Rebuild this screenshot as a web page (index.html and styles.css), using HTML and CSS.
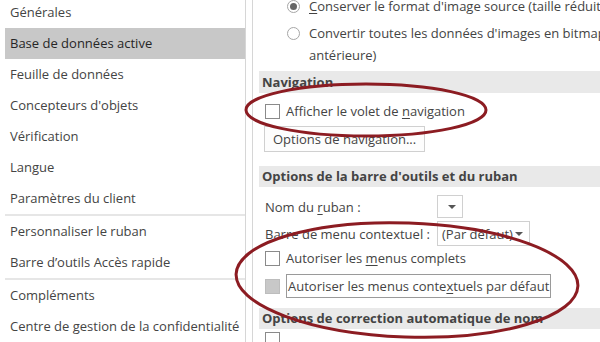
FILE: index.html
```html
<!DOCTYPE html>
<html lang="fr">
<head>
	<meta charset="utf-8">
	<title>Options Access</title>
	<link rel="stylesheet" href="styles.css">
</head>
<body>
	<div class="app">
		<ul class="menu">
			<li>Générales</li>
			<li class="sel">Base de données active</li>
			<li>Feuille de données</li>
			<li>Concepteurs d'objets</li>
			<li>Vérification</li>
			<li>Langue</li>
			<li>Paramètres du client</li>
			<li class="sep"></li>
			<li>Personnaliser le ruban</li>
			<li>Barre d’outils Accès rapide</li>
			<li class="sep"></li>
			<li>Compléments</li>
			<li>Centre de gestion de la confidentialité</li>
		</ul>
		<div class="panel">
			<div class="radio-row first"><span class="radio on"></span><span><u>C</u>onserver le format d'image source (taille réduite</span></div>
			<div class="radio-row"><span class="radio"></span><span>Convertir toutes les données d'images en bitmap<br>antérieure)</span></div>

			<div class="head h-nav">Navigation</div>
			<div class="check-row nav"><span class="box"></span><span>Afficher le volet de <u>n</u>avigation</span></div>
			<div class="btn">Options de navigation...</div>

			<div class="head h-bar">Options de la barre d'outils et du ruban</div>
			<div class="field-row r1"><span class="lbl">Nom du <u>r</u>uban :</span><span class="drop small"><i class="arrow"></i></span></div>
			<div class="field-row r2"><span class="lbl">Barre de menu contextuel :</span><span class="drop wide">(Par défaut)<i class="arrow"></i></span></div>
			<div class="check-row c1"><span class="box"></span><span>Autoriser les <u>m</u>enus complets</span></div>
			<div class="check-row c2"><span class="box grey"></span><span class="focus">Autoriser les menus conte<u>x</u>tuels par défaut</span></div>

			<div class="head h-corr">Options de correction automatique de nom</div>
			<div class="check-row c3"><span class="box"></span></div>
		</div>
	</div>
	<!-- annotations drawn over the screenshot -->
	<svg class="marks" width="600" height="342" viewBox="0 0 600 342">
		<ellipse cx="366" cy="110" rx="120" ry="26" />
		<ellipse cx="407" cy="280" rx="171" ry="57" transform="rotate(2 407 280)" />
	</svg>
</body>
</html>
```

FILE: styles.css
```css
body {
	margin: 0;
	width: 600px;
	height: 342px;
	overflow: hidden;
	background: #fff;
	color: #444;
	font-family: "Open Sans", "Noto Sans", sans-serif;
	font-size: 13px;
	position: relative;
}

u {
	text-decoration-thickness: 1px;
	text-underline-offset: 2px;
}

.app {
	display: flex;
	height: 342px;
}

/* left menu */
.menu {
	list-style: none;
	margin: -3px 0 0 0;
	padding: 0 0 0 5px;
	width: 240px;
	border-right: 1px solid #d6d6d6;
	flex-shrink: 0;
}

.menu li {
	height: 31px;
	line-height: 31px;
	padding-left: 5px;
	white-space: nowrap;
}

.menu li.sel {
	background: #c8c8c8;
	color: #262626;
}

.menu li.sep {
	height: 0;
	padding: 0;
	border-top: 2px solid #e6e6e6;
}

/* right panel */
.panel {
	margin-left: 6px;
	border-left: 1px solid #d6d6d6;
	padding-left: 6px;
	flex: 1;
	white-space: nowrap;
	overflow: hidden;
}

.radio-row {
	display: flex;
	align-items: flex-start;
	padding-left: 28px;
	line-height: 22px;
}

.radio-row.first {
	margin-top: -5px;
}

.radio-row + .radio-row {
	margin-top: 5px;
}

.radio {
	width: 11px;
	height: 11px;
	border: 1px solid #a6a6a6;
	border-radius: 50%;
	margin: 5px 9px 0 0;
	position: relative;
	flex-shrink: 0;
}

.radio.on::after {
	content: "";
	position: absolute;
	left: 2px;
	top: 2px;
	width: 7px;
	height: 7px;
	border-radius: 50%;
	background: #666;
}

.head {
	background: #e9e9e9;
	height: 22px;
	line-height: 22px;
	padding-left: 3px;
	font-weight: 700;
	margin-right: -10px;
}

.h-nav { margin-top: 5px; }
.h-bar { margin-top: 14px; height: 21px; line-height: 21px; }
.h-corr { margin-top: 10px; height: 21px; line-height: 21px; }

.check-row {
	display: flex;
	align-items: center;
	padding-left: 6px;
	height: 24px;
}

.box {
	width: 13px;
	height: 13px;
	border: 1px solid #8a8a8a;
	background: #fff;
	margin-right: 6px;
	flex-shrink: 0;
}

.box.grey {
	background: #c8c8c8;
	border-color: #bdbdbd;
}

.check-row.nav { margin-top: 6px; }
.check-row.c1 { margin-top: 1px; height: 22px; }
.check-row.c2 { margin-top: 5px; }
.check-row.c3 { margin-top: 3px; align-items: flex-start; }

.focus {
	border: 1px solid #9a9a9a;
	padding: 0 1px;
	line-height: 22px;
}

.btn {
	display: inline-block;
	margin: 3px 0 0 5px;
	height: 24px;
	line-height: 24px;
	padding: 0 8px;
	border: 1px solid #d0d0d0;
	background: #fdfdfd;
}

.field-row {
	display: flex;
	align-items: center;
	padding-left: 6px;
}

.field-row.r1 { margin-top: 8px; height: 23px; }
.field-row.r2 { margin-top: 3px; height: 25px; }

.lbl {
	width: 172px;
}

.drop {
	height: 100%;
	box-sizing: border-box;
	border: 1px solid #d0d0d0;
	display: flex;
	align-items: center;
	justify-content: flex-end;
	padding: 0 6px 0 4px;
	background: #fff;
}

.drop.small { width: 26px; }
.drop.wide { width: 93px; justify-content: space-between; }

.arrow {
	width: 0;
	height: 0;
	border-left: 4px solid transparent;
	border-right: 4px solid transparent;
	border-top: 4px solid #555;
}

.marks {
	position: absolute;
	left: 0;
	top: 0;
	pointer-events: none;
}

.marks ellipse {
	fill: none;
	stroke: #8c1c22;
	stroke-width: 3;
}
```
